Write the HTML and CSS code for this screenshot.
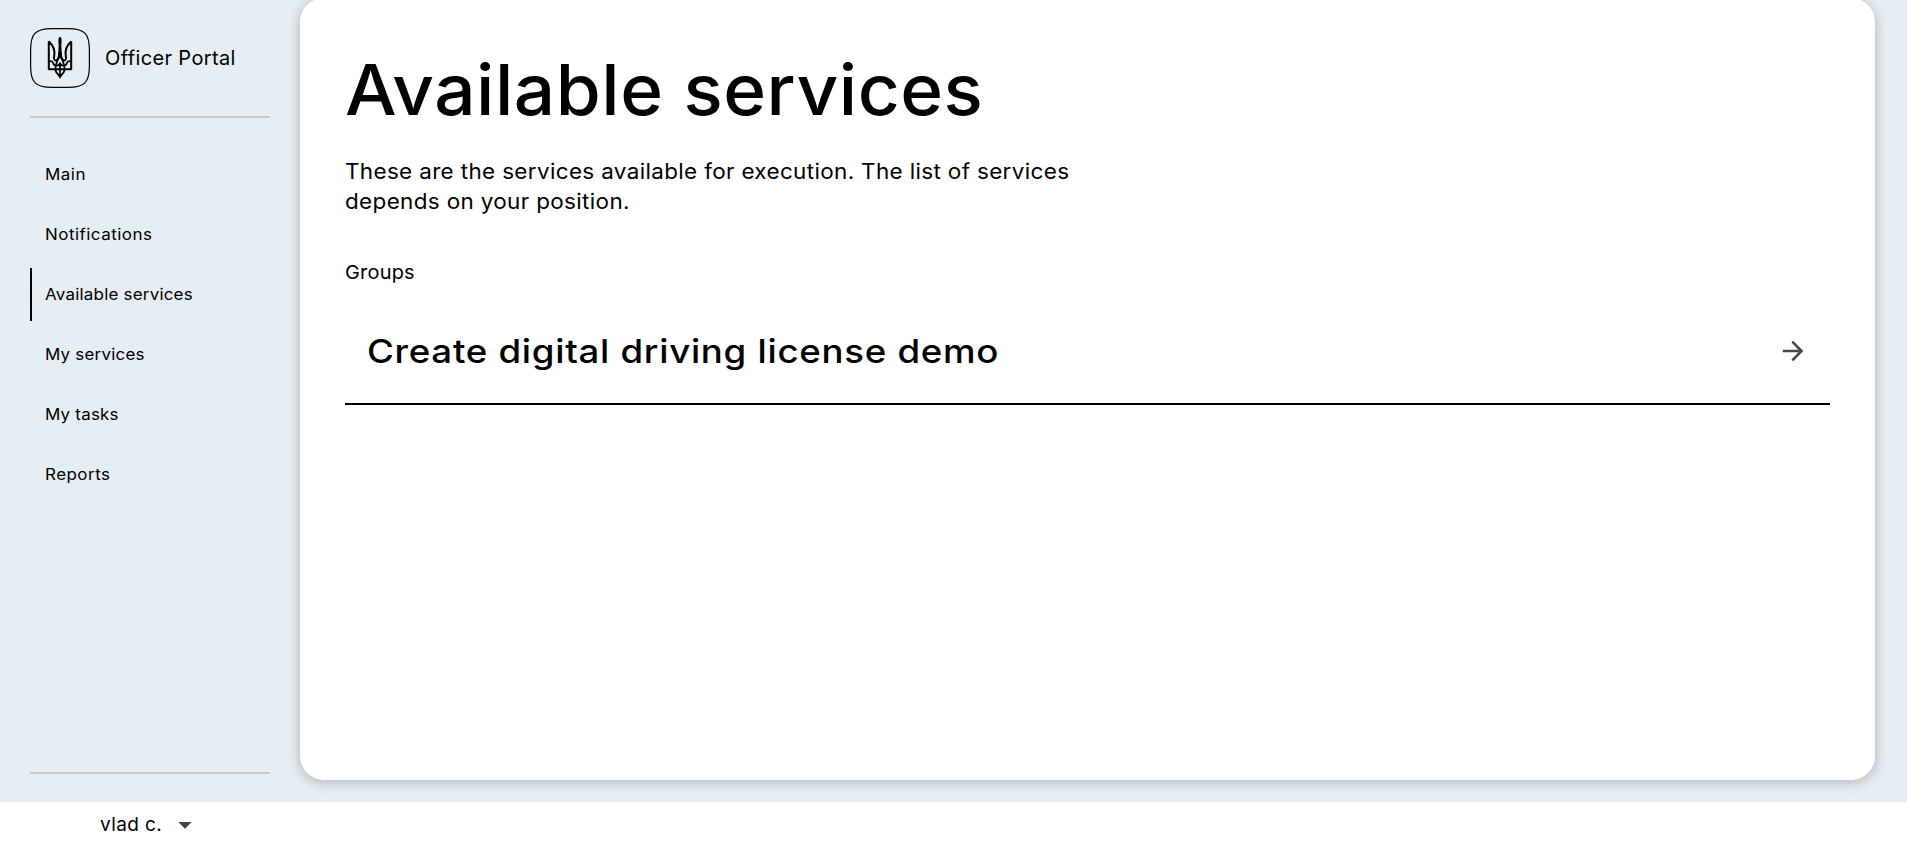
FILE: index.html
```html
<!DOCTYPE html>
<html lang="en">
<head>
<meta charset="utf-8">
<title>Officer Portal</title>
<link rel="stylesheet" href="styles.css">
</head>
<body>
<div class="layout">
  <aside class="sidebar">
    <div class="brand">
      <svg class="logo" width="60" height="60" viewBox="0 0 60 60" fill="none" stroke="#000">
        <path stroke-width="1.200" d="M.6 22C.6 5.500 5.500 .6 22 .6H38C54.500 .6 59.400 5.500 59.400 22V38C59.400 54.500 54.500 59.400 38 59.400H22C5.500 59.400 .6 54.500 .6 38Z"/>
        <path stroke-width="2" stroke-linejoin="bevel" d="M24.500 41.200H18.800V13.500C23.500 17.500 25.200 22 24.200 28C23.700 31 23.700 32 25.500 32.500C28 32.500 29.200 29.500 29.300 24M35.500 41.200H41.200V13.500C36.500 17.500 34.800 22 35.800 28C36.300 31 36.300 32 34.500 32.500C32 32.500 30.800 29.500 30.700 24M24.500 41.200H35.500"/>
        <path fill="#000" stroke-width=".6" d="M30 9C31.600 9.500 31.400 13 31 17L31.400 27L30 30L28.600 27L29 17C28.600 13 28.400 9.500 30 9Z"/>
        <path stroke-width="1.700" d="M18.800 33.500C21.800 32.500 23 34 23.500 36C25 38.600 28.500 38.200 30 35.500C31.500 38.200 35 38.600 36.500 36C37 34 38.200 32.500 41.200 33.500M29.700 28C27 32.500 25.600 36 25.400 42C26 45.500 28.500 46 30 49C31.500 46 34 45.500 34.600 42C34.400 36 33 32.500 30.300 28M30 36V48"/>
      </svg>
      <span class="brand-name">Officer Portal</span>
    </div>
    <nav class="menu">
      <a class="item main"><span>Main</span></a>
      <a class="item notifications"><span>Notifications</span></a>
      <a class="item available active"><span>Available services</span></a>
      <a class="item services"><span>My services</span></a>
      <a class="item tasks"><span>My tasks</span></a>
      <a class="item reports"><span>Reports</span></a>
    </nav>
    <div class="user">
      <span class="user-name">vlad c.</span>
      <svg width="24" height="24" viewBox="0 0 24 24"><path fill="#444" d="M5.300 9h13.400L12 15.700z"/></svg>
    </div>
  </aside>
  <main class="card">
    <h1>Available services</h1>
    <p class="intro">These are the services available for execution. The list of services<br>depends on your position.</p>
    <h2>Groups</h2>
    <div class="group">
      <span class="group-name">Create digital driving license demo</span>
      <svg width="24" height="24" viewBox="0 0 24 24" fill="none" stroke="#444" stroke-width="2.500"><path d="M1.800 12H20.500M11.300 2.700L20.600 12L11.300 21.300"/></svg>
    </div>
  </main>
</div>
</body>
</html>
```
FILE: styles.css
```css
* { box-sizing: border-box; }
body { margin: 0; height: 867px; overflow: hidden; background: #fff; color: #000; font-family: Inter, "Liberation Sans", sans-serif; }
.layout { display: flex; height: 802px; background: #e6edf3; }
.sidebar { width: 300px; height: 867px; padding: 28px 30px 0; display: flex; flex-direction: column; }
.brand { height: 90px; flex: none; display: flex; align-items: flex-start; gap: 15px; border-bottom: 2px solid #c8c8c8; }
.brand-name { line-height: 60px; font-size: 20px; letter-spacing: .37px; white-space: nowrap; }
.menu { display: flex; flex: none; flex-direction: column; gap: 7px; padding-top: 30px; height: 656px; border-bottom: 2px solid #c8c8c8; }
.item { height: 53px; line-height: 53px; padding-left: 15px; font-size: 16px; letter-spacing: .2px; white-space: nowrap; }
.item span { display: inline-block; transform: scaleX(1.06); transform-origin: left; }
.main, .notifications, .reports { letter-spacing: .45px; }
.active { border-left: 2px solid #000; padding-left: 13px; }
.user { display: flex; flex: none; align-items: center; padding-left: 70px; gap: 11px; line-height: 60px; height: 102px; font-size: 19px; letter-spacing: .4px; }
.card { width: 1575px; height: 782px; margin-top: -2px; padding: 56px 45px 0; background: #fff; border-radius: 24px; box-shadow: 0 2px 14px rgba(0, 0, 0, .24); }
h1 { margin: 0; font-size: 70px; line-height: 72px; font-weight: 500; letter-spacing: .5px; white-space: nowrap; transform: scaleX(1.041); transform-origin: left; }
.intro { margin: 31px 0 0; font-size: 21px; line-height: 30px; letter-spacing: .32px; white-space: nowrap; transform: scaleX(1.07); transform-origin: left; }
h2 { margin: 41px 0 0; font-size: 19px; line-height: 30px; font-weight: 400; letter-spacing: .2px; transform: scaleX(1.05); transform-origin: left; }
.group { margin-top: 11px; height: 106px; padding: 0 25px 0 22px; display: flex; align-items: center; justify-content: space-between; border-bottom: 2px solid #000; }
.group-name { font-size: 33px; font-weight: 500; letter-spacing: .65px; white-space: nowrap; transform: scaleX(1.11); transform-origin: left; }
```
